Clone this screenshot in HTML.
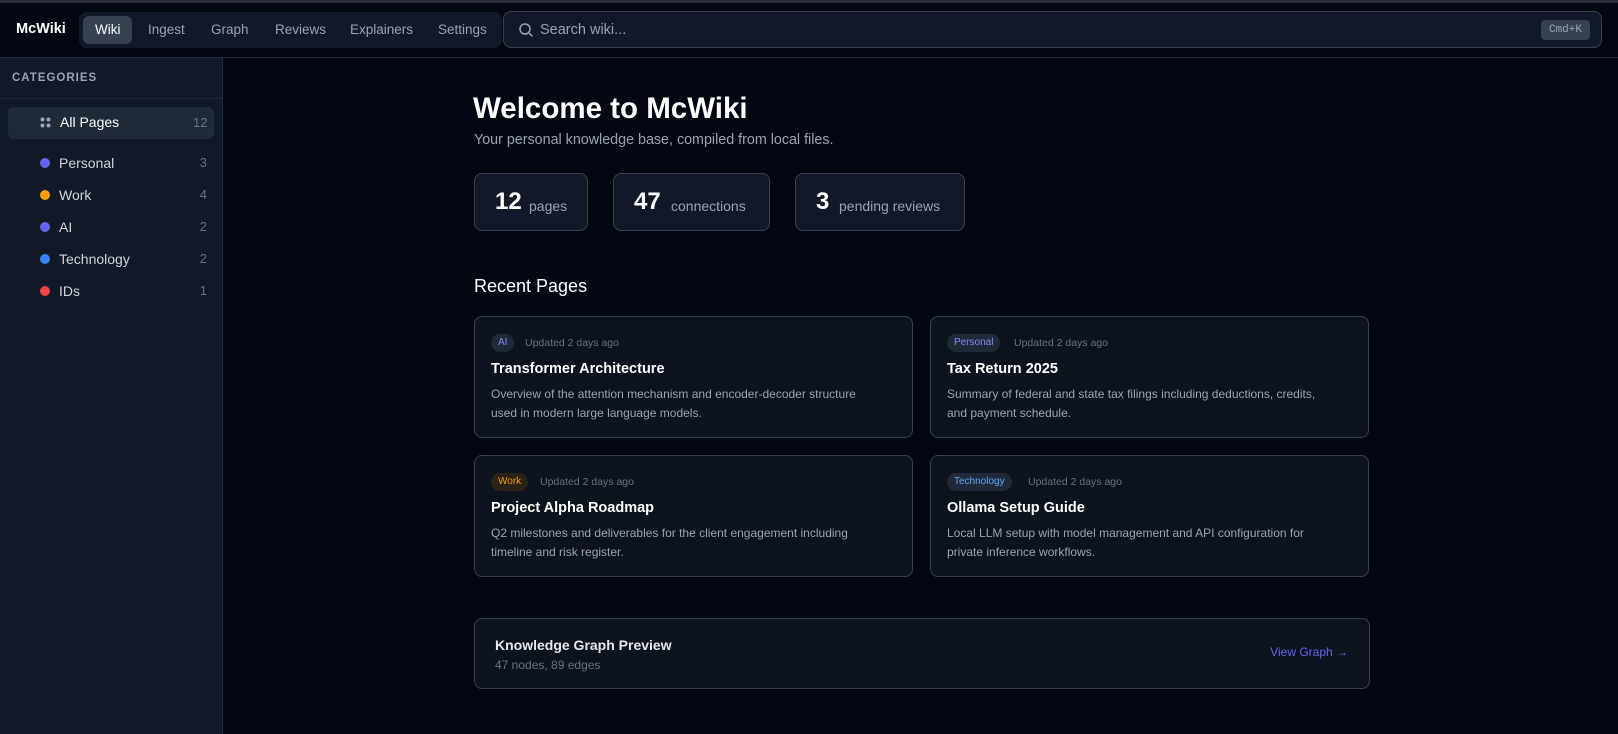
<!DOCTYPE html>
<html><head><meta charset="utf-8"><style>
*{margin:0;padding:0;box-sizing:border-box}
body{width:1618px;height:734px;background:#030712;font-family:"Liberation Sans",sans-serif;color:#e5e7eb;position:relative;overflow:hidden}
.abs{position:absolute}
.top{left:0;top:0;width:1618px;height:3px;background:#2a2f3a}
.hdr{left:0;top:3px;width:1618px;height:55px;border-bottom:1px solid #1f2937;background:#030712}
.logo{left:16px;top:21px;font-size:14.5px;font-weight:bold;color:#fff}
.nav{left:79px;top:12px;width:423px;height:36px;background:#111827;border-radius:8px}
.nav span{position:absolute;top:10px;font-size:13.5px;color:#9ca3af}
.act{left:83px;top:16px;width:49px;height:28px;background:#374151;border-radius:6px}
.search{left:503px;top:11px;width:1099px;height:37px;border:1px solid #374151;border-radius:8px;background:#111827}
.kbd{left:1541px;top:20px;width:49px;height:20px;background:#374151;border-radius:4px;font-family:"Liberation Mono",monospace;font-size:11px;color:#9ca3af;text-align:center;line-height:20px}
.side{left:0;top:58px;width:223px;height:676px;background:#111827;border-right:1px solid #1f2937}
.cat{left:12px;top:72px;font-size:11.5px;font-weight:bold;letter-spacing:1px;color:#9ca3af}
.sdiv{left:0;top:98px;width:223px;height:1px;background:#1f2937}
.allp{left:8px;top:107px;width:206px;height:32px;background:#1f2937;border-radius:6px}
.item{left:40px;font-size:14px;color:#d1d5db;width:167px}
.item i{display:inline-block;width:10px;height:10px;border-radius:5px;margin-right:9px;vertical-align:0}
.item b{position:absolute;right:0;font-weight:normal;color:#6b7280;font-size:13px}
.stat{top:173px;height:58px;border:1px solid #374151;border-radius:8px;background:#111827}
.stat .n{position:absolute;top:14px;font-size:24px;font-weight:bold;color:#fff}
.stat .l{position:absolute;top:24px;font-size:14px;color:#9ca3af}
.card{width:439px;height:122px;border:1px solid #374151;border-radius:8px;background:#0d131d}
.tag{position:absolute;left:16px;top:17px;height:18px;border-radius:9px;background:#1f2937;font-size:10px;line-height:18px;padding:0 7px}
.upd{position:absolute;top:20px;font-size:10.5px;color:#6b7280}
.ct{position:absolute;left:16px;top:44px;font-size:14.5px;font-weight:bold;color:#fff}
.cd{position:absolute;left:16px;top:68px;width:385px;font-size:12px;line-height:19px;color:#9ca3af}
</style></head><body>
<div class="abs top"></div>
<div class="abs hdr"></div>
<div class="abs logo">McWiki</div>
<div class="abs nav"></div>
<div class="abs act"></div>
<div class="abs nav" style="background:none">
<span style="left:16px;color:#fff">Wiki</span><span style="left:69px">Ingest</span><span style="left:132px">Graph</span><span style="left:196px">Reviews</span><span style="left:271px">Explainers</span><span style="left:359px">Settings</span></div>
<div class="abs search">
<svg class="abs" style="left:14px;top:10px" width="16" height="16" viewBox="0 0 16 16" fill="none" stroke="#9ca3af" stroke-width="1.5"><circle cx="7" cy="7" r="5"/><path d="M11 11l3.5 3.5"/></svg>
<span class="abs" style="left:36px;top:10px;font-size:14.5px;color:#9ca3af">Search wiki...</span></div>
<div class="abs kbd">Cmd+K</div>

<div class="abs side"></div>
<div class="abs cat">CATEGORIES</div>
<div class="abs sdiv"></div>
<div class="abs allp"></div>
<svg class="abs" style="left:40px;top:117px" width="11" height="11" viewBox="0 0 11 11" fill="#9ca3af"><circle cx="2.5" cy="2.5" r="2"/><circle cx="8.5" cy="2.5" r="2"/><circle cx="2.5" cy="8.5" r="2"/><circle cx="8.5" cy="8.5" r="2"/></svg>
<div class="abs" style="left:60px;top:114px;font-size:14px;color:#fff">All Pages</div>
<div class="abs" style="left:193px;top:115px;font-size:13px;color:#6b7280">12</div>
<div class="abs item" style="top:155px"><i style="background:#6366f1"></i>Personal<b>3</b></div>
<div class="abs item" style="top:187px"><i style="background:#f59e0b"></i>Work<b>4</b></div>
<div class="abs item" style="top:219px"><i style="background:#6366f1"></i>AI<b>2</b></div>
<div class="abs item" style="top:251px"><i style="background:#3b82f6"></i>Technology<b>2</b></div>
<div class="abs item" style="top:283px"><i style="background:#ef4444"></i>IDs<b>1</b></div>

<div class="abs" style="left:473px;top:92px;font-size:29.5px;font-weight:bold;color:#fff">Welcome to McWiki</div>
<div class="abs" style="left:474px;top:132px;font-size:14.3px;color:#9ca3af">Your personal knowledge base, compiled from local files.</div>

<div class="abs stat" style="left:474px;width:114px"><span class="n" style="left:20px">12</span><span class="l" style="left:54px">pages</span></div>
<div class="abs stat" style="left:613px;width:157px"><span class="n" style="left:20px">47</span><span class="l" style="left:57px">connections</span></div>
<div class="abs stat" style="left:795px;width:170px"><span class="n" style="left:20px">3</span><span class="l" style="left:43px">pending reviews</span></div>

<div class="abs" style="left:474px;top:276px;font-size:18px;color:#fff">Recent Pages</div>

<div class="abs card" style="left:474px;top:316px"><span class="tag" style="color:#818cf8">AI</span><span class="upd" style="left:50px">Updated 2 days ago</span><div class="ct">Transformer Architecture</div><div class="cd">Overview of the attention mechanism and encoder-decoder structure used in modern large language models.</div></div>
<div class="abs card" style="left:930px;top:316px"><span class="tag" style="color:#818cf8">Personal</span><span class="upd" style="left:83px">Updated 2 days ago</span><div class="ct">Tax Return 2025</div><div class="cd">Summary of federal and state tax filings including deductions, credits, and payment schedule.</div></div>
<div class="abs card" style="left:474px;top:455px"><span class="tag" style="color:#f59e0b;background:#2a2216">Work</span><span class="upd" style="left:65px">Updated 2 days ago</span><div class="ct">Project Alpha Roadmap</div><div class="cd">Q2 milestones and deliverables for the client engagement including timeline and risk register.</div></div>
<div class="abs card" style="left:930px;top:455px"><span class="tag" style="color:#60a5fa">Technology</span><span class="upd" style="left:97px">Updated 2 days ago</span><div class="ct">Ollama Setup Guide</div><div class="cd">Local LLM setup with model management and API configuration for private inference workflows.</div></div>

<div class="abs" style="left:474px;top:618px;width:896px;height:71px;border:1px solid #374151;border-radius:8px;background:#0d131d">
<div class="abs" style="left:20px;top:18px;font-size:14px;font-weight:bold;color:#e5e7eb">Knowledge Graph Preview</div>
<div class="abs" style="left:20px;top:39px;font-size:12px;color:#6b7280">47 nodes, 89 edges</div>
<div class="abs" style="right:21px;top:26px;font-size:12px;color:#6366f1">View Graph →</div>
</div>
</body></html>
